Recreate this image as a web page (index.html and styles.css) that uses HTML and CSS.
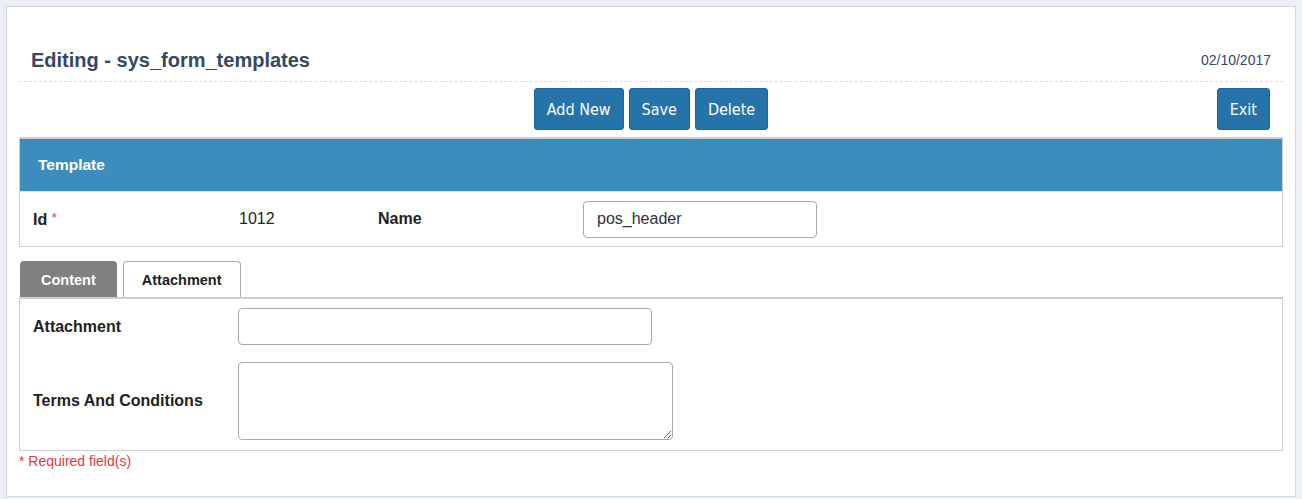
FILE: index.html
```html
<!DOCTYPE html>
<html lang="en">
<head>
    <meta charset="UTF-8">
    <meta name="viewport" content="width=device-width, initial-scale=1.0">
    <title>Editing - sys_form_templates</title>
    <link rel="stylesheet" href="styles.css">
</head>
<body>

<div class="page">
    <div class="page-header">
        <h2>Editing - sys_form_templates</h2>
        <span class="date">02/10/2017</span>
    </div>

    <div class="toolbar">
        <div class="actions">
            <button class="btn">Add New</button>
            <button class="btn">Save</button>
            <button class="btn">Delete</button>
        </div>
        <button class="btn exit">Exit</button>
    </div>

    <div class="box">
        <div class="box-title">Template</div>
        <div class="box-row">
            <label>Id <span class="req">*</span></label>
            <span class="value">1012</span>
            <label>Name</label>
            <input type="text" class="field name-field" value="pos_header">
        </div>
    </div>

    <div class="tabs">
        <div class="tab active">Content</div>
        <div class="tab">Attachment</div>
    </div>
    <div class="tab-pane">
        <div class="form-row">
            <label>Attachment</label>
            <input type="text" class="field attach-field">
        </div>
        <div class="form-row">
            <label>Terms And Conditions</label>
            <textarea class="field terms-field"></textarea>
        </div>
    </div>
    <div class="required-note">* Required field(s)</div>
</div>

</body>
</html>
```

FILE: styles.css
```css
body {
    font-family: 'Liberation Sans', Arial, sans-serif;
    background-color: #ecf0f5;
    margin: 0;
    padding: 6px;
    color: #333;
}
.page {
    background-color: #fff;
    border: 1px solid #d2d6de;
    padding: 41px 12px 27px;
}
.page-header {
    display: flex;
    justify-content: space-between;
    align-items: flex-end;
    padding: 0 12px 9px;
    border-bottom: 1px dashed #ddd;
}
.page-header h2 {
    margin: 0;
    font-size: 20px;
    line-height: 24px;
    color: #34495e;
}
.page-header .date {
    font-size: 14px;
    line-height: 16px;
    margin-bottom: 4px;
    color: #34495e;
}
.toolbar {
    display: grid;
    grid-template-columns: 1fr auto 1fr;
    margin-top: 6px;
}
.actions {
    grid-column: 2;
    display: flex;
    gap: 5px;
}
.btn {
    height: 42px;
    padding: 0 12px;
    border: 1px solid #1f6495;
    border-radius: 3px;
    background-color: #2673aa;
    color: #fff;
    font-family: 'DejaVu Sans Condensed', 'Liberation Sans', sans-serif;
    font-size: 16px;
    cursor: pointer;
}
.btn.exit {
    grid-column: 3;
    justify-self: end;
    margin-right: 13px;
}
.box {
    margin-top: 7px;
    border: 1px solid #d0d0d0;
    border-top: 2px solid #cfcfcf;
}
.box-title {
    background-color: #3c8dbc;
    color: #fff;
    font-weight: bold;
    font-size: 15.5px;
    height: 52px;
    line-height: 52px;
    padding-left: 18px;
    border-bottom: 1px solid #dde3e8;
}
.box-row {
    display: grid;
    grid-template-columns: 206px 139px 205px auto;
    align-items: center;
    height: 54px;
    padding-left: 13px;
    font-size: 16px;
}
label {
    font-weight: bold;
    font-size: 16px;
    color: #222;
}
.req {
    color: #e03b3b;
    font-size: 13px;
    vertical-align: 3px;
    font-weight: normal;
}
.value {
    color: #222;
}
.field {
    box-sizing: border-box;
    height: 37px;
    border: 1px solid #aaa;
    border-radius: 4px;
    padding: 0 13px;
    font-family: 'Liberation Sans', Arial, sans-serif;
    font-size: 16px;
    color: #333;
}
.name-field {
    width: 234px;
}
.tabs {
    display: flex;
    gap: 6px;
    margin-top: 14px;
    padding-left: 1px;
}
.tab {
    height: 36px;
    line-height: 36px;
    box-sizing: border-box;
    padding: 0 18px;
    border: 1px solid #aaa;
    border-bottom: none;
    border-radius: 4px 4px 0 0;
    font-weight: bold;
    font-size: 14.5px;
    color: #222;
    background-color: #fff;
}
.tab.active {
    padding: 0 20px;
    background-color: #808080;
    border-color: #808080;
    color: #fff;
}
.tab-pane {
    border: 1px solid #d0d0d0;
    border-top: 2px solid #cfcfcf;
    padding: 9px 0 10px 13px;
    display: flex;
    flex-direction: column;
    gap: 17px;
}
.form-row {
    display: grid;
    grid-template-columns: 205px auto;
    align-items: center;
    justify-content: start;
}
.attach-field {
    width: 414px;
}
.terms-field {
    width: 435px;
    height: 78px;
    padding: 6px 13px;
    resize: both;
}
.required-note {
    margin-top: 2px;
    font-size: 14px;
    line-height: 16px;
    color: #e0393e;
}
```
